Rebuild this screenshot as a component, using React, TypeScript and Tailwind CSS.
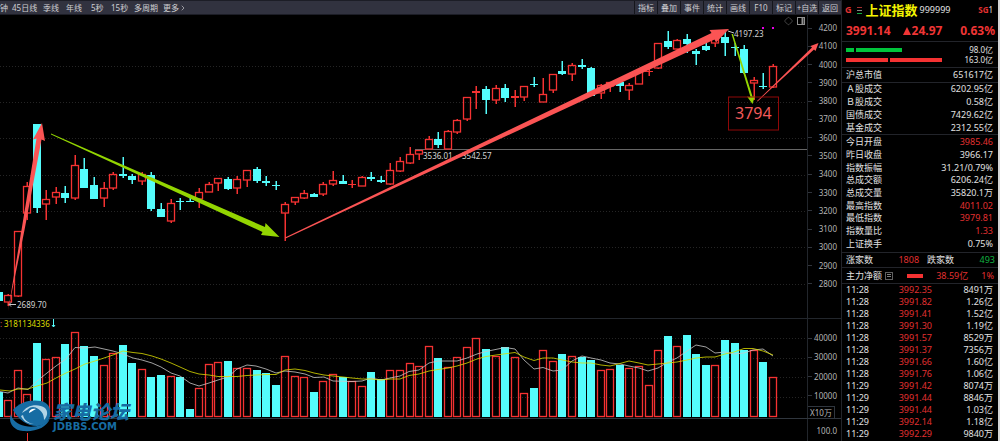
import { ChevronRight, Diamond, PanelRight } from "lucide-react";
import clsx from "clsx";

type Candle = {
  up: boolean;
  high: number;
  top: number;
  bottom: number;
  low: number;
  vol: number;
};

const STEP = 9.56;
const FIRST_X = 8;
const VOLUME_BASE = 416;

const UP = "#f53232";
const DOWN = "#54fcfc";

// kind, high, body top, body bottom, low, volume top
const raw = `
u 294 295 302 306 400|u 231 231 296 297 370|u 182 186 213 220 394|d 124 124 208 213 343|u 190 199 204 220 359
u 187 192 197 204 357|d 186 193 198 203 344|u 155 165 198 200 332|d 158 169 188 188 346|d 177 185 199 199 356
u 182 188 198 207 365|u 172 174 188 190 353|d 157 174 176 178 345|d 174 176 180 184 363|u 172 174 181 185 369
d 172 175 209 211 377|d 203 209 217 217 375|u 199 203 221 223 376|d 198 201 202 210 377|d 198 201 202 202 409
u 188 192 199 208 388|u 182 184 192 192 364|u 178 178 183 191 362|d 177 179 189 190 361|u 176 179 188 194 368
u 170 170 180 187 368|d 167 169 181 183 370|d 176 181 183 186 373|d 181 185 186 190 385|u 202 204 213 241 356
u 197 197 202 205 376|u 190 193 198 199 377|d 193 194 197 197 392|u 182 184 194 196 381|u 171 180 184 186 374
d 175 181 184 184 377|u 180 184 185 188 381|u 176 177 186 186 386|d 172 177 179 181 372|d 176 180 182 183 379
u 163 170 184 185 370|u 157 161 171 172 370|u 147 154 163 164 363|u 150 150 154 160 366|u 136 139 149 149 346
d 132 139 145 148 358|u 130 131 149 149 367|u 119 120 132 134 357|u 97 97 119 121 347|u 86 91 93 109 338
d 86 89 100 114 349|u 85 88 100 104 356|d 84 88 98 102 347|u 90 96 98 107 357|u 86 86 97 101 393
d 77 84 85 87 388|u 78 94 102 102 350|u 74 74 90 93 361|d 61 71 74 75 354|u 63 65 74 81 356
d 59 65 67 69 357|d 67 68 96 96 360|u 84 85 93 99 370|u 82 82 86 92 369|d 80 82 86 92 365
u 83 85 90 100 368|u 71 71 84 84 366|u 69 71 72 76 385|u 43 43 68 69 350|d 31 41 47 49 336
u 39 40 49 50 346|d 34 39 44 53 335|d 49 51 54 65 354|d 42 46 50 51 365|u 36 38 43 47 365
d 31 37 43 56 340|d 43 47 48 56 343|d 45 49 73 74 350|u 77 80 83 100 350|d 73 86 87 89 362
u 64 66 87 88 377`;

const candles: Candle[] = raw
  .trim()
  .split(/[|\n]/)
  .map((row) => {
    const [kind, high, top, bottom, low, vol] = row.split(" ");
    return { up: kind === "u", high: +high, top: +top, bottom: +bottom, low: +low, vol: +vol };
  });

const maShort =
  "0,391.5 8,393 18,388 28,389.5 37,381 47,373 56,366 66,359 75,347.5 85,348 95,347 104,349 113,351 123,354 133,358 142,360 152,363 161,367 171,373 180,376 190,383 199,386 209,383 218,380 228,377 237,369 247,365 256,366 266,369 276,373 285,371 295,372 305,374 314,377.5 324,377 333,381 352,381.5 362,381 371,378 381,380 390,378 400,376 409,371.5 419,370 429,363 438,361 457,361 467,358 477,354 486,351.5 505,347.5 515,349 524,360 534,369 543,367.5 553,371 562,370 572,361 582,356 591,358 601,360 610,363 620,364 629,366 639,368 648,371 658,368 668,362 677,358 687,351 696,345 706,347 715,353 725,352 734,354 744,353 753,350 763,349 773,356";
const maLong =
  "0,390 10,391 18,389 28,389 37,386 47,383 56,378 66,373 75,369 85,364 95,361 104,358 113,355 123,351 133,352.5 142,353.5 152,356 161,359 171,363 180,367 190,371.5 199,374 209,375 218,376.5 237,376.5 247,375.5 266,374.5 276,374.5 285,370 295,369 305,370.5 314,373 324,375 333,376 343,377 352,378 362,379 371,379 381,380 390,379 400,379 409,375.5 419,374 429,371 438,369.5 448,368 457,366 467,363 477,359 486,356.5 496,355 515,352.5 524,357 534,360.5 543,358 553,358 572,362 582,363 591,363 601,365 610,366 620,363.5 629,361 639,363 648,365 658,364 668,363 677,362 687,360 696,358 706,357 715,357 725,354 734,352 744,348.5 753,348.5 763,351 773,355";

const periods = [
  { name: "钟", width: "w-[12px]" },
  { name: "45日线", width: "w-[31px]" },
  { name: "季线", width: "w-[23px]" },
  { name: "年线", width: "w-[25px]" },
  { name: "5秒", width: "w-[20px]" },
  { name: "15秒", width: "w-[23px]" },
  { name: "多周期", width: "w-[29px]" },
];
const tools = ["指标", "叠加", "事件", "统计", "画线", "F10", "标记", "+自选", "返回"];

const prices = [4200, 4100, 4000, 3900, 3800, 3700, 3600, 3500, 3400, 3300, 3200, 3100, 3000, 2900, 2800];
const volumes = [40000, 30000, 20000, 10000];

const turnover = [
  ["Ａ股成交", "6202.95亿"],
  ["Ｂ股成交", "0.58亿"],
  ["国债成交", "7429.62亿"],
  ["基金成交", "2312.55亿"],
];

const stats = [
  ["今日开盘", "3985.46", "red"],
  ["昨日收盘", "3966.17"],
  ["指数振幅", "31.21/0.79%"],
  ["总成交额", "6206.24亿"],
  ["总成交量", "35820.1万"],
  ["最高指数", "4011.02", "red"],
  ["最低指数", "3979.81", "red"],
  ["指数量比", "1.33", "red"],
  ["上证换手", "0.75%"],
];

const ticks = [
  ["11:28", "3992.35", "8491万"],
  ["11:28", "3991.82", "1.26亿"],
  ["11:28", "3991.41", "1.52亿"],
  ["11:28", "3991.30", "1.19亿"],
  ["11:28", "3991.57", "8529万"],
  ["11:28", "3991.37", "7356万"],
  ["11:28", "3991.66", "1.60亿"],
  ["11:28", "3991.76", "1.06亿"],
  ["11:29", "3991.42", "8074万"],
  ["11:29", "3991.44", "8846万"],
  ["11:29", "3991.44", "1.03亿"],
  ["11:29", "3992.14", "1.18亿"],
  ["11:29", "3992.29", "9840万"],
];

function Toolbar() {
  return (
    <nav className="flex h-[15px] items-stretch justify-between border-y border-[#1c1d26] bg-[#31323f] text-[8px] leading-[13px] text-[#cfcfd2]">
      <div className="flex">
        {periods.map((p) => (
          <button key={p.name} className={clsx("shrink-0 text-left whitespace-nowrap", p.width)}>
            {p.name}
          </button>
        ))}
        <button className="flex items-center">
          更多
          <ChevronRight size={8} />
        </button>
      </div>
      <div className="flex">
        {tools.map((t) => (
          <button key={t} className="min-w-[23px] border-l border-[#15161c] whitespace-nowrap">
            {t}
          </button>
        ))}
      </div>
    </nav>
  );
}

function PriceChart() {
  return (
    <svg viewBox="0 15 807 303" className="relative z-10 block h-auto w-full overflow-visible" fontSize={8}>
      {[66, 102, 138, 175, 211, 247, 284].map((y) => (
        <line key={y} x1={0} x2={807} y1={y + 0.5} y2={y + 0.5} stroke="#252525" strokeDasharray="1 2" />
      ))}
      <line x1={415} x2={807} y1={149.5} y2={149.5} stroke="#666666" />

      <rect x={0} y={292} width={3} height={9} fill={DOWN} />
      {candles.map((c, i) => {
        const x = Math.round(FIRST_X + i * STEP);
        const color = c.up ? UP : DOWN;
        const height = Math.max(c.bottom - c.top, 1);
        return (
          <g key={i}>
            <rect x={x - 0.5} y={c.high} width={1.5} height={Math.max(c.top - c.high, 0)} fill={color} />
            <rect x={x - 0.5} y={c.bottom} width={1.5} height={Math.max(c.low - c.bottom, 0)} fill={color} />
            {c.up && height > 2 ? (
              <rect x={x - 3.5} y={c.top + 0.5} width={7} height={height - 0.5} fill="none" stroke={color} strokeWidth={1.3} />
            ) : (
              <rect x={x - 4} y={c.top} width={8} height={height} fill={color} />
            )}
          </g>
        );
      })}

      <g fill="#d4d4d4">
        <text x={17} y={308}>2689.70</text>
        <text x={423} y={159}>3536.01</text>
        <text x={462} y={159}>3542.57</text>
        <text x={734} y={37}>4197.23</text>
      </g>
      <path d="M456 156h3M9 304.500h7M11 302.500l-2 2 2 2M728 31l6 2" stroke="#c8c8c8" fill="none" />
      <rect x={762} y={27} width={2} height={2} fill="#e800e8" />
      <rect x={772} y={27} width={2} height={2} fill="#e800e8" />
      <Diamond x={784} y={16.5} size={9} color="#5c5c5c" />
      <g stroke="#909090" fill="none">
        <rect x={797.5} y={17.5} width={7} height={7} />
        <path d="M802.500 18v6" strokeWidth={2} />
      </g>

      {/* trend arrows */}
      <g fill="#fb5454">
        <path d="M8 311L21.500 230 36.500 138.500 33 139.500 42 123 45 141 41.500 139.500 24.500 230z" />
        <path d="M285 237.500L711.500 33 709.500 30 729 29 716 42.500 714.500 39.500 285.500 238.500z" />
        <path d="M757 101L812 47.500 810.500 46 818.500 43 815.500 51 814 49.500 757.500 101.500z" />
      </g>
      <g fill="#93d501">
        <path d="M51 133.500L265 227 265.500 223 279.500 237 261 235 262.500 232 51 134.500z" />
        <path d="M731.500 34L750.500 97 747 96.500 752.500 104 755 96 752.500 96.500 733 34z" />
      </g>
      <rect x={728.5} y={97} width={50} height={33} fill="none" stroke="#8f0808" />
      <text x={735} y={119} fontSize={16} fill="#f25a5a">3794</text>
    </svg>
  );
}

function VolumeChart() {
  return (
    <svg viewBox="0 319 807 99" className="block h-auto w-full overflow-visible" fontSize={8}>
      {[338, 358, 377, 397].map((y) => (
        <line key={y} x1={0} x2={807} y1={y + 0.5} y2={y + 0.5} stroke="#252525" strokeDasharray="1 2" />
      ))}
      <text x={0} y={327} fill="#d86060">:</text>
      <text x={4} y={327} fill="#dcdc00">3181134336</text>
      <path d="M53.500 319v8M52 325l1.500 2 1.500-2" stroke={DOWN} fill="none" />
      <rect x={0} y={392} width={3} height={25} fill={DOWN} />
      {candles.map((c, i) => {
        const x = Math.round(FIRST_X + i * STEP);
        return c.up ? (
          <rect key={i} x={x - 3.5} y={c.vol + 0.5} width={7} height={VOLUME_BASE - c.vol} fill="none" stroke={UP} strokeWidth={1.3} />
        ) : (
          <rect key={i} x={x - 4} y={c.vol} width={8} height={VOLUME_BASE + 1 - c.vol} fill={DOWN} />
        );
      })}
      <polyline points={maShort} fill="none" stroke="#c8c8c8" strokeWidth={0.8} />
      <polyline points={maLong} fill="none" stroke="#dcdc00" strokeWidth={0.8} />
    </svg>
  );
}

function Watermark() {
  return (
    <div className="absolute bottom-[9px] left-[9px] z-20 flex items-end gap-[2px] text-[#176ca3]">
      <svg viewBox="0 0 42 32" width={42} height={32}>
        <path d="M4 10C10 2 22-1 32 1c8 2 10 8 9 15-1 6-7 10-13 10C18 26 10 20 4 10z" fill="#176ca3" />
        <path d="M2 14C-1 21 3 30 14 31c12 1 24-3 27-13-5 8-17 10-25 8C8 24 3 20 2 14z" fill="#176ca3" />
        <path d="M13 13C17 5 29 3 36 8c3 3 3 8-1 12 0-6-3-11-9-12-5 0-9 2-13 5z" fill="#cfe6f2" opacity={0.85} />
        <path d="M14 15c1 5 5 8 11 9-6 0-11-3-13-8z" fill="#cfe6f2" opacity={0.85} />
        <circle cx={24} cy={14} r={7} fill="#176ca3" />
        <path d="M20 13c0-3 3-5 7-4-3 1-4 3-7 4z" fill="#ffffff" />
      </svg>
      <div className="flex flex-col">
        <span className="text-[19px] leading-[28px] font-black italic">家电论坛</span>
        <span className="-mt-1 font-['DejaVu_Sans'] text-[10px] leading-[10px] font-bold">JDBBS.COM</span>
      </div>
    </div>
  );
}

function AxisTicks({ count }: { count: number }) {
  return (
    <div className="flex flex-col justify-between">
      {Array.from({ length: count }, (_, i) => (
        <span key={i} className="flex h-4 w-1 items-center">
          <span className="h-px w-full bg-[#30343c]" />
        </span>
      ))}
    </div>
  );
}

function Row({ label, value, red }: { label: string; value: string; red?: boolean }) {
  return (
    <div className="flex items-center justify-between">
      <dt>{label}</dt>
      <dd className={clsx(red && "text-[#e23030]")}>{value}</dd>
    </div>
  );
}

function QuotePanel() {
  return (
    <aside className="w-[159px] shrink-0 border-r-2 border-l border-r-[#d4d4d4] border-l-[#22242a] bg-black text-[9px] leading-[12px] text-[#e0e0e0]">
      <header className="flex h-5 items-center pr-[5px] pl-[3px]">
        <b className="text-[#e23030]">G</b>
        <span className="ml-[5px] flex w-[5px] flex-col gap-[2px]">
          <i className="h-px bg-[#a03030]" />
          <i className="h-px bg-[#888888]" />
          <i className="h-px bg-[#10b040]" />
        </span>
        <h1 className="ml-[4px] text-[13px] font-bold text-[#f4f400]">上证指数</h1>
        <span className="ml-[2px]">999999</span>
        <span className="ml-auto text-[8px]">
          <b className="text-[#e23030]">SG</b>1
        </span>
      </header>
      <div className="flex h-[22px] items-center border-b border-[#22242a] pr-[3px] pl-[4px] text-[12px] font-bold text-[#f03535]">
        <span>3991.14</span>
        <svg viewBox="0 0 8 8" width={8} height={8} className="ml-3">
          <path d="M4 0l4 8H0z" fill="#f03535" />
        </svg>
        <span className="ml-px">24.97</span>
        <span className="ml-auto">0.63%</span>
      </div>
      <div className="flex h-[26px] flex-col justify-center border-b border-[#22242a] pr-[5px] pl-[4px] text-[8px] leading-[10px]">
        <div className="flex items-center gap-[2px]">
          <i className="h-1 w-2 bg-[#00c43c]" />
          <i className="h-1 w-[46px] bg-[#00c43c]" />
          <span className="ml-auto">98.0亿</span>
        </div>
        <div className="flex items-center gap-[2px]">
          <i className="h-1 w-[42px] bg-[#f53232]" />
          <i className="h-1 w-[52px] bg-[#f53232]" />
          <span className="ml-auto">163.0亿</span>
        </div>
      </div>
      <dl className="h-[15px] border-b border-[#22242a] pt-px pr-[5px] pl-[4px]">
        <Row label="沪总市值" value="651617亿" />
      </dl>
      <dl className="grid h-[52px] auto-rows-fr border-b border-[#22242a] pr-[5px] pl-[4px]">
        {turnover.map(([label, value]) => (
          <Row key={label} label={label} value={value} />
        ))}
      </dl>
      <dl className="grid h-[118px] auto-rows-fr border-b border-[#22242a] pt-px pr-[5px] pb-[2px] pl-[4px]">
        {stats.map(([label, value, tone]) => (
          <Row key={label} label={label} value={value} red={tone === "red"} />
        ))}
      </dl>
      <div className="flex h-[15px] items-center border-b border-[#22242a] pr-[3px] pl-[4px]">
        <span>涨家数</span>
        <span className="ml-auto text-[#e23030]">1808</span>
        <span className="ml-2">跌家数</span>
        <span className="ml-auto text-[#10b040]">493</span>
      </div>
      <div className="flex h-4 items-center border-b border-[#22242a] pr-[4px] pl-[4px] text-[#e23030]">
        <span className="text-[#e0e0e0]">主力净额</span>
        <button aria-label="明细" className="ml-[3px] flex h-2 w-2 flex-col justify-center gap-px border border-[#606060] px-px">
          <i className="h-px w-full bg-[#808080]" />
          <i className="h-px w-full bg-[#808080]" />
        </button>
        <i className="ml-[14px] h-1 w-4 bg-[#f53232]" />
        <span className="ml-auto">38.59亿</span>
        <span className="ml-auto">1%</span>
      </div>
      <table className="w-full table-fixed">
        <tbody>
          {ticks.map(([time, price, amount], i) => (
            <tr key={i} className="h-3">
              <td className="w-[40px] p-0 pl-[4px]">{time}</td>
              <td className="w-[50px] p-0 text-right text-[#e23030]">{price}</td>
              <td className="p-0 pr-[5px] text-right">{amount}</td>
            </tr>
          ))}
        </tbody>
      </table>
    </aside>
  );
}

export default function App() {
  return (
    <div className="flex min-h-screen overflow-hidden bg-black font-['Noto_Sans','Noto_Sans_CJK_SC',sans-serif]">
      <main className="relative flex min-w-0 flex-1 flex-col text-[8px] text-[#b4b4b4]">
        <Toolbar />
        <section className="flex border-b border-[#22262c]">
          <div className="min-w-0 flex-1">
            <PriceChart />
          </div>
          <div className="flex w-[34px] justify-between border-l border-[#22262c] pt-[5px] pr-[4px] pb-[26px]">
            <AxisTicks count={15} />
            <ul className="flex flex-col justify-between text-right leading-4">
              {prices.map((p) => (
                <li key={p}>{p}</li>
              ))}
            </ul>
          </div>
        </section>
        <section className="flex border-b border-[#30363e]">
          <div className="min-w-0 flex-1">
            <VolumeChart />
          </div>
          <div className="flex w-[34px] flex-col justify-between border-l border-[#22262c] pt-[11px]">
            <div className="flex h-[74px] justify-between pr-[4px]">
              <AxisTicks count={4} />
              <ul className="flex flex-col justify-between text-right leading-4">
                {volumes.map((v) => (
                  <li key={v}>{v}</li>
                ))}
              </ul>
            </div>
            <span className="w-[27px] border-t border-r border-[#30363e] text-center leading-[11px]">X10万</span>
          </div>
        </section>
        <section className="flex flex-1">
          <div className="flex flex-1 items-end">
            <i className="ml-[27px] h-2 w-px bg-[#f53232]" />
          </div>
          <div className="w-[34px] border-l border-[#22262c] pt-1 pr-[4px] text-right leading-4">100.0</div>
        </section>
        <Watermark />
      </main>
      <QuotePanel />
    </div>
  );
}
